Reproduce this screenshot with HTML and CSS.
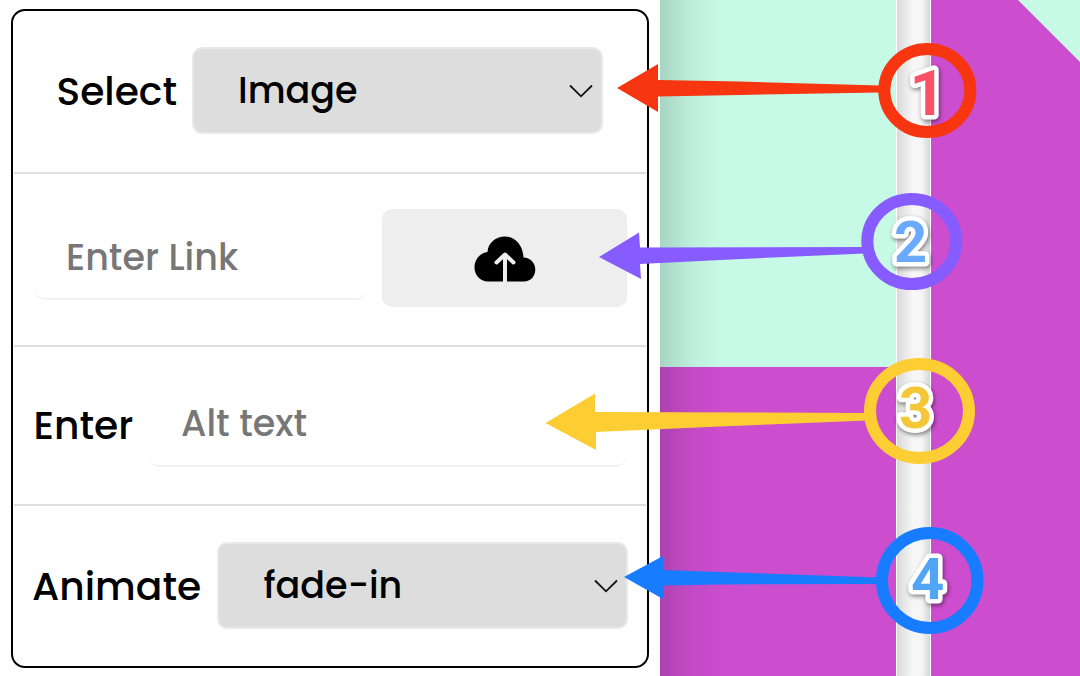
FILE: index.html
```html
<!DOCTYPE html>
<html lang="en">
<head>
<meta charset="utf-8">
<title>Element settings</title>
<link rel="stylesheet" href="styles.css">
</head>
<body>
<main class="screen">
  <section class="side">
    <div class="card">
      <div class="row row-select">
        <span class="label label-select">Select</span>
        <div class="dropdown"><span class="t-image">Image</span>
          <svg class="chevron" viewBox="0 0 24 14"><path d="M1 1.500 12 12.300 23 1.500"/></svg>
        </div>
      </div>
      <div class="row row-link">
        <div class="field link-field"><span class="t-link">Enter Link</span></div>
        <div class="upload">
          <svg class="cloud" viewBox="0 0 62 46"><path class="cloud-body" d="M14 45.500C6 45.500.5 39 .5 31.500.5 23 6.500 17 13.500 16 14 7 21.500.5 31 .5 41 .5 49 9 49.500 21.500 56 21.500 61.300 26.500 61.300 33.500 61.300 40.500 56.500 45.500 50 45.500Z"/><path class="cloud-arrow" d="M31 47V18.500"/><path class="cloud-arrow" stroke-linecap="round" stroke-linejoin="round" d="M22.500 26.500 31 18.500 39.500 26.500"/></svg>
        </div>
      </div>
      <div class="row row-alt">
        <span class="label label-enter">Enter</span>
        <div class="field alt-field"><span class="t-alt">Alt text</span></div>
      </div>
      <div class="row row-animate">
        <span class="label label-animate">Animate</span>
        <div class="dropdown"><span class="t-fade">fade-in</span>
          <svg class="chevron" viewBox="0 0 24 14"><path d="M1 1.500 12 12.300 23 1.500"/></svg>
        </div>
      </div>
    </div>
  </section>
  <section class="preview">
    <div class="pane"><div class="mint"></div></div>
    <div class="gutter"></div>
    <div class="pane-right"><svg class="corner" viewBox="0 0 62 62"><path d="M0 0H62V62Z"/></svg></div>
  </section>
  <svg class="notes" viewBox="0 0 1080 676">
    <g class="red"><path d="M617 88 658 64V80L740 81.500 880 85.500V92.500L740 95 658 96.500V112Z"/><ellipse cx="927.300" cy="90.500" rx="43" ry="41.500"/></g>
    <g class="violet"><path d="M599 257 639 232.500 640 247.500 864 247V253.500L720 260 640 264 641 279Z"/><ellipse cx="911.800" cy="241.500" rx="44.500" ry="42.500"/></g>
    <g class="yellow"><path d="M545.500 423 595 393.500V412L868 413V420.500L720 426.500 596 432V450Z"/><ellipse cx="919.500" cy="411" rx="49.500" ry="47"/></g>
    <g class="blue"><path d="M624 577 663 556V570L720 572 880 577.500V584L720 584.500 663 585.500V599Z"/><ellipse cx="929.700" cy="580.500" rx="47.800" ry="47.500"/></g>
    <g class="digits">
      <text class="one" x="909.500" y="114.500">1</text>
      <text class="two" x="894" y="262.200">2</text>
      <text class="three" x="899" y="427.500">3</text>
      <text class="four" x="911" y="598.500">4</text>
    </g>
  </svg>
</main>
</body>
</html>
```
FILE: styles.css
```css
* { box-sizing: border-box; }
body { margin: 0; background: #fff; color: #000; font-family: Poppins, Inter, "Open Sans", sans-serif; font-weight: 500; }
.screen { position: relative; display: flex; width: 1080px; height: 676px; overflow: hidden; }
.side { width: 660px; padding: 9px 11px 8px; background: #fff; }
.card { width: 638px; height: 659px; border: 2px solid #000; border-radius: 14px; display: grid; grid-template-rows: 163px 173px 159px 160px; }
.row { display: flex; align-items: flex-start; margin: 0 1px; border-bottom: 2px solid #dedede; font-size: 36.5px; line-height: 44px; white-space: nowrap; }
.row:last-child { border-bottom: 0; }
.label { flex: none; font-size: 39.2px; }
.row-select { padding: 36px 43px 0 42.5px; }
.row-link { padding: 35px 19px 0 21px; gap: 15px; }
.row-alt { padding: 35px 20px 0 19.5px; }
.row-animate { padding: 36px 18px 0 18px; }
.label-select { width: 135px; padding-top: 23px; }
.label-enter { width: 115.500px; padding-top: 22px; }
.label-animate { width: 185px; padding-top: 23px; }
.dropdown { flex: 1; height: 87px; display: flex; align-items: center; justify-content: space-between; padding: 1px 8px 0 44.5px; border: 2px solid #e9e9e9; border-radius: 10px; background: #ddd; }
.chevron { width: 24px; height: 14px; fill: none; stroke: #111; stroke-width: 1.8; }
.field { border-bottom: 2px solid #f1f1f1; border-radius: 10px; color: #777; }
.link-field { width: 332px; height: 91px; padding: 27px 0 0 31px; }
.alt-field { flex: 1; height: 85px; padding: 20px 0 0 32px; }
.upload { flex: 1; height: 98px; display: flex; align-items: center; justify-content: center; border-radius: 10px; background: #eee; }
.cloud { width: 62px; height: 46px; margin-top: 2px; }
.cloud-arrow { fill: none; stroke: #eee; stroke-width: 4; }
.preview { display: flex; width: 420px; height: 676px; }
.pane { width: 236px; background: linear-gradient(90deg, #00000026, #0000001a 14px, #0000000b 32px, #0000 62px), #cc4dce; }
.mint { height: 367px; background: linear-gradient(90deg, #00000026, #0000001a 14px, #0000000b 32px, #0000 62px), #c6f9e6; }
.gutter { width: 35px; border: solid #fff; border-width: 0 1px; background: linear-gradient(90deg, #d8d8d8, #e9e9e9 25%, #f7f7f7 50%, #f5f5f5 75%, #d6d6d6); }
.pane-right { flex: 1; background: #cc4dce; text-align: right; line-height: 0; }
.corner { width: 62px; height: 62px; fill: #c6f9e6; }
.notes { position: absolute; inset: 0; width: 1080px; height: 676px; }
.notes ellipse { fill: none; stroke-width: 12; }
.red { fill: #f73510; stroke: #f73510; stroke-width: 0; }
.violet { fill: #865bff; stroke: #865bff; stroke-width: 0; }
.yellow { fill: #fdce34; stroke: #fdce34; stroke-width: 0; }
.blue { fill: #177cff; stroke: #177cff; stroke-width: 0; }
.digits { font: 700 58px Roboto, sans-serif; stroke: #fff; stroke-width: 9px; stroke-linejoin: round; paint-order: stroke; filter: drop-shadow(1px 2px 2px #0007); }
.one { font-size: 63px; fill: #fa5264; }
.two { fill: #69aaff; }
.three { fill: #f5c636; }
.four { fill: #50a5f5; }
```
